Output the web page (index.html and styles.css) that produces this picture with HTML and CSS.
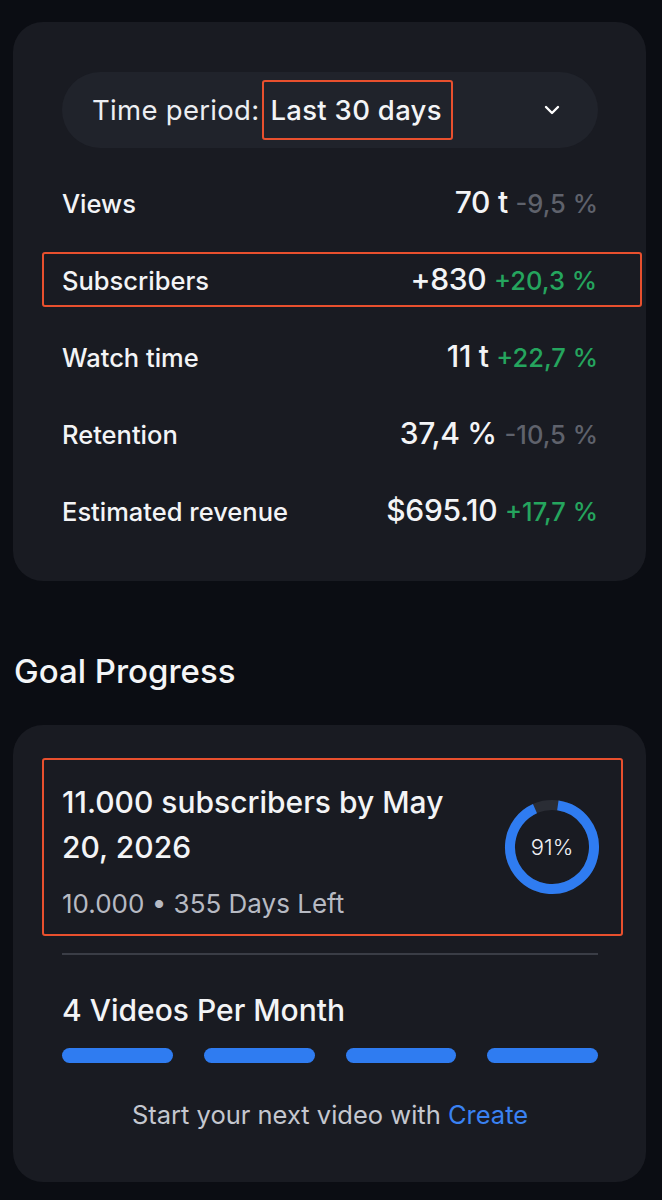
FILE: index.html
```html
<!DOCTYPE html>
<html>
<head>
<meta charset="utf-8">
<link rel="stylesheet" href="styles.css">
</head>
<body>
<div class="page">
  <section class="card stats">
    <div class="period">
      <span class="period-label">Time period:</span>
      <span class="period-value hl">Last 30 days</span>
      <svg class="chev" width="18" height="12" viewBox="0 0 18 12"><path d="M3 3 L9 9 L15 3" fill="none" stroke="#fff" stroke-width="2.4" stroke-linecap="round" stroke-linejoin="round"/></svg>
    </div>
    <div class="row"><span class="lbl">Views</span><span class="val">70 t <span class="chg neg">-9,5 %</span></span></div>
    <div class="row hl-row"><span class="lbl">Subscribers</span><span class="val">+830 <span class="chg pos">+20,3 %</span></span></div>
    <div class="row"><span class="lbl">Watch time</span><span class="val">11 t <span class="chg pos">+22,7 %</span></span></div>
    <div class="row"><span class="lbl">Retention</span><span class="val">37,4 % <span class="chg neg">-10,5 %</span></span></div>
    <div class="row"><span class="lbl">Estimated revenue</span><span class="val">$695.10 <span class="chg pos">+17,7 %</span></span></div>
  </section>

  <h2 class="title">Goal Progress</h2>

  <section class="card goals">
    <div class="goal hl-goal">
      <div class="goal-text">
        <div class="goal-name">11.000 subscribers by May 20, 2026</div>
        <div class="goal-sub">10.000 • 355 Days Left</div>
      </div>
      <div class="ring">
        <svg width="96" height="96" viewBox="0 0 96 96">
          <circle cx="48" cy="48" r="42" fill="none" stroke="#2a2d35" stroke-width="10"/>
          <circle cx="48" cy="48" r="42" fill="none" stroke="#2f7cf1" stroke-width="10" stroke-dasharray="240.1 263.9" transform="rotate(-90 48 48) rotate(8 48 48)"/>
        </svg>
        <span class="ring-txt">91%</span>
      </div>
    </div>
    <div class="divider"></div>
    <div class="videos-title">4 Videos Per Month</div>
    <div class="bars"><span></span><span></span><span></span><span></span></div>
    <div class="hint">Start your next video with <span class="link">Create</span></div>
  </section>
</div>
</body>
</html>
```

FILE: styles.css
```css
* { box-sizing: border-box; }
html, body { margin: 0; padding: 0; background: #0b0d13; }
body {
  font-family: "Inter", "Noto Sans", sans-serif;
  color: #f3f4f6;
  width: 662px;
  height: 1200px;
  overflow: hidden;
}
.page { padding: 22px 16px 0 13px; }
.card {
  background: #191b22;
  border-radius: 30px;
}
.stats { padding: 50px 48px 44px 49px; height: 559px; }
.period {
  height: 76px;
  background: #20232b;
  border-radius: 38px;
  display: flex;
  align-items: center;
  padding: 0 37px 0 30px;
  font-size: 27.5px;
  letter-spacing: 0.3px;
  margin-bottom: 16px;
}
.period-label { color: #eceef2; margin-right: 3px; }
.period-value {
  font-weight: 500;
  padding: 12px 9px 12px 6px;
  border: 2.5px solid #e8502e;
  border-radius: 3px;
  line-height: 32px;
}
.chev { margin-left: auto; }
.row {
  display: flex;
  justify-content: space-between;
  align-items: baseline;
  height: 77px;
  line-height: 77px;
  font-size: 25.5px;
  font-weight: 500;
}
.hl-row {
  margin: 0 -44px 0 -20px;
  padding: 0 43px 0 18px;
  height: 55px;
  line-height: 50px;
  border: 2.5px solid #e8502e;
  border-radius: 3px;
  margin-top: 11px;
  margin-bottom: 11px;
}
.val { font-size: 30px; font-weight: 500; letter-spacing: -0.3px; }
.chg { font-size: 25.5px; letter-spacing: 0; }
.pos { color: #25a55e; }
.neg { color: #5f626c; }
.title {
  margin: 70px 0 0 1px;
  font-size: 33px;
  font-weight: 500;
  color: #f4f5f7;
  height: 74px;
  line-height: 40px;
}
.goals { padding: 33px 48px 0 49px; height: 457px; }
.goal {
  display: flex;
  align-items: center;
  justify-content: space-between;
  margin: 0 -25px 0 -20px;
  padding: 0 21px 0 18px;
  border: 2.5px solid #e8502e;
  border-radius: 3px;
  height: 178px;
}
.goal-text { width: 400px; padding-top: 4px; }
.goal-name { font-size: 30px; font-weight: 500; line-height: 45px; }
.goal-sub { font-size: 26px; color: #b7bac3; margin-top: 18px; }
.ring { position: relative; width: 96px; height: 96px; }
.ring svg { display: block; }
.ring-txt {
  position: absolute; inset: 0;
  display: flex; align-items: center; justify-content: center;
  font-size: 22px; font-weight: 300; color: #f0f1f4;
}
.divider { height: 2px; background: #3a3d46; margin-top: 17px; }
.videos-title { font-size: 30px; font-weight: 500; margin-top: 36px; line-height: 38px; }
.bars { display: flex; gap: 31px; margin-top: 19px; }
.bars span { flex: 1; height: 15px; border-radius: 8px; background: #2f7cf1; }
.hint { text-align: center; font-size: 25.5px; color: #c4c7cf; margin-top: 36px; }
.link { color: #3a82f2; }
```
